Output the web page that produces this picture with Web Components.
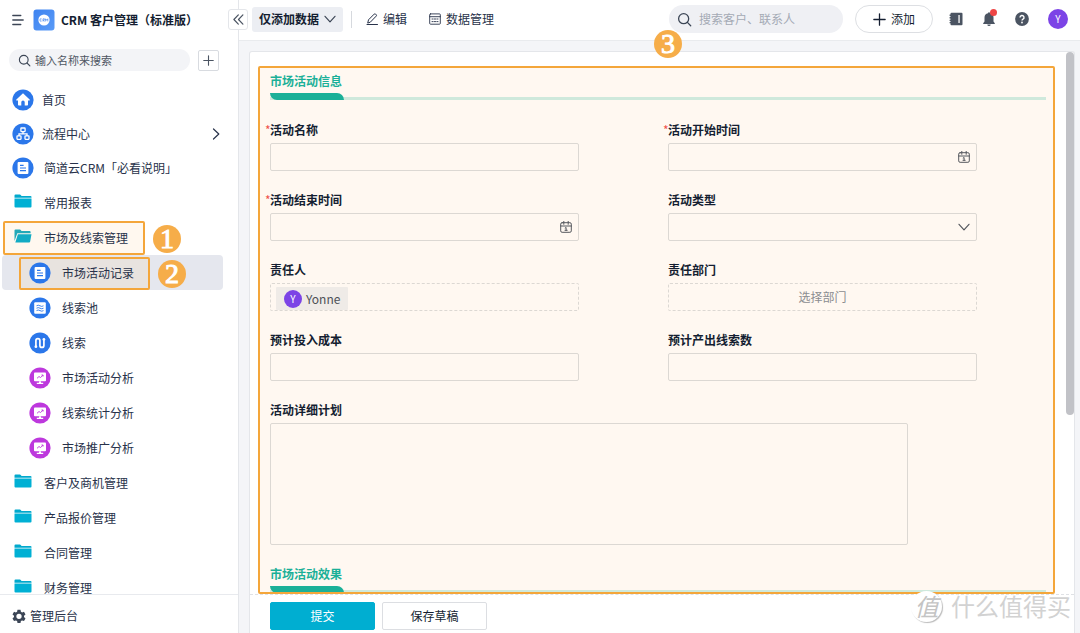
<!DOCTYPE html>
<html lang="zh-CN">
<head>
<meta charset="utf-8">
<meta name="viewport" content="width=device-width, initial-scale=1">
<title>CRM 客户管理（标准版）</title>
<style>
  html, body { margin: 0; height: 100%; }
  body {
    --ink: #141e31;
    --accent: #00aed1;
    --mark: #f4a63a;
    --teal: #1bb098;
    font: 12px/18px "Noto Sans CJK SC", "Noto Sans", sans-serif;
    color: var(--ink);
    background: #f4f5f8;
    overflow: hidden;
  }
</style>
</head>
<body>
<crm-app></crm-app>

<script>
const define = (name, html, setup) => {
  const template = document.createElement('template');
  template.innerHTML = '<style>*{box-sizing:border-box}:host{box-sizing:border-box}button,input,select,textarea{font:inherit;color:inherit;margin:0}button{cursor:pointer}</style>' + html;
  customElements.define(name, class extends HTMLElement {
    constructor() {
      super();
      this.attachShadow({ mode: 'open' }).append(template.content.cloneNode(true));
    }
    connectedCallback() { if (setup) setup(this, this.shadowRoot); }
  });
};

/* ---------- icons ---------- */
const disc = (fill, body) => `<svg viewBox="0 0 22 22"><circle cx="11" cy="11" r="10.6" fill="${fill}"/>${body}</svg>`;
const line = (box, body, w = 1.2) => `<svg viewBox="0 0 ${box} ${box}" fill="none" stroke="currentColor" stroke-width="${w}" stroke-linecap="round" stroke-linejoin="round">${body}</svg>`;
const BLUE = '#2b77ea';
const ICONS = {
  menu: line(12, '<path d="M.8 1.500h8M.8 6h10.400M.8 10.500h8"/>', 1.300),
  logo: `<svg viewBox="0 0 22 22"><defs><linearGradient id="g" x1="0" y1="0" x2="1" y2="1"><stop offset="0" stop-color="#3e83f0"/><stop offset="1" stop-color="#5a9bf7"/></linearGradient></defs><rect x=".5" y=".5" width="21" height="21" rx="3" fill="url(#g)"/><circle cx="11" cy="11" r="5.600" fill="#fff"/><path d="M8.600 9.900a1.200 1.200 0 1 0 0 2.200M10 12.400V9.800h1.200a.7.700 0 0 1 0 1.400H10l1.400 1.200M12.600 12.400V9.800l1.100 1.500 1.100-1.500v2.600" fill="none" stroke="#5a93ee" stroke-width=".8"/></svg>`,
  search: line(14, '<circle cx="6.200" cy="6.200" r="4.700"/><path d="M9.700 9.700 12.800 12.800"/>', 1.200),
  plus: line(12, '<path d="M6 .8v10.400M.8 6h10.400"/>', 1.200),
  collapse: line(12, '<path d="M5.800 1 1 6l4.800 5M10.800 1 6 6l4.800 5"/>', 1.300),
  right: line(12, '<path d="M3.500 1 8.800 6l-5.300 5"/>', 1.200),
  down: line(12, '<path d="M1 3.300 6 8.800l5-5.500"/>', 1.200),
  edit: line(12, '<path d="M1.800 9.700l.7-2.900L8.200 1.100a1 1 0 0 1 1.400 0l.6.6a1 1 0 0 1 0 1.400L4.600 8.900zM1 11.500h10.500"/>', 1),
  table: line(12, '<rect x=".7" y=".9" width="10.600" height="10.300" rx=".8"/><path d="M.7 3.700h10.600M3 6h1.200M5.400 6h1.200M7.800 6h1.200M3 8.600h1.200M5.400 8.600h1.200M7.800 8.600h1.200"/>', .9),
  calendar: line(12, '<rect x=".7" y="1.700" width="10.600" height="9.600" rx="1.400"/><path d="M.7 5h10.600M3.800.4v2.900M8.200.4v2.900M5.200 7 6.100 6.500V9.300M5 9.300h2.200"/>', 1),
  home: disc(BLUE, '<path d="M11 4.300 17.600 10.600a.5.500 0 0 1-.4.900H16v4.300a.8.800 0 0 1-.8.800h-2.500v-3.300a1.700 1.700 0 0 0-3.400 0v3.300H6.800a.8.800 0 0 1-.8-.8v-4.300H4.800a.5.500 0 0 1-.4-.9z" fill="#fff"/>'),
  flow: disc(BLUE, '<g fill="none" stroke="#fff" stroke-width="1.300"><rect x="8.900" y="5" width="4.200" height="3.600" rx=".5"/><rect x="5" y="12.900" width="4" height="3.400" rx=".5"/><rect x="13" y="12.900" width="4" height="3.400" rx=".5"/><path d="M11 8.600v2.200M7 12.900v-2.100h8v2.100"/></g>'),
  doc: disc(BLUE, '<rect x="5.600" y="5" width="10.800" height="12" rx="1" fill="#fff"/><path d="M8 8.400h3.600M8 11h6M8 13.600h6" stroke="#2b77ea" stroke-width="1.100"/>'),
  pool: disc(BLUE, '<rect x="5.200" y="5.200" width="11.600" height="11.600" rx="1" fill="#fff"/><path d="M7.500 8.800q1.700-1.200 3.500 0t3.500 0M7.500 11.200q1.700-1.200 3.500 0t3.500 0M7.500 13.600q1.700-1.200 3.500 0t3.500 0" fill="none" stroke="#2b77ea" stroke-width=".9"/>'),
  clue: disc(BLUE, '<path d="M6.900 14.300V8.700a2 2 0 0 1 4 0v4.700a2 2 0 0 0 4 0V8.200" fill="none" stroke="#fff" stroke-width="1.700"/><circle cx="6.900" cy="14.700" r="1.400" fill="#fff"/><circle cx="14.900" cy="7.500" r="1.400" fill="#fff"/>'),
  board: disc('#bd38dd', '<rect x="5" y="5.600" width="12" height="8.600" rx=".9" fill="#fff"/><path d="M10.200 14.200h1.600l.4 1.700h-2.400zM7.800 15.700h6.400v1.200H7.800z" fill="#fff"/><path d="M8 11.300l2-1.800 1.500 1 2.500-2.300M12.500 8h1.600v1.500" fill="none" stroke="#bd38dd" stroke-width=".9"/>'),
  folder: '<svg viewBox="0 0 18 14"><path d="M.5 3.700V1.500a1 1 0 0 1 1-1h4.600l1.500 1.400h8.900a1 1 0 0 1 1 1v.8z" fill="#00a9cd"/><path d="M.5 4.600h17v8a1 1 0 0 1-1 1h-15a1 1 0 0 1-1-1z" fill="#00b0d4"/></svg>',
  opened: '<svg viewBox="0 0 18 14"><path d="M.5 12V1.500a1 1 0 0 1 1-1h4.600l1.500 1.400h8a1 1 0 0 1 1 1v1.300H3.300z" fill="#23a9b8"/><path d="M3.900 5.200h13.600l-1.400 7.600a1 1 0 0 1-1 .8H1.300z" fill="#12abc4"/></svg>',
  gear: '<svg viewBox="0 0 14 14"><path fill="currentColor" fill-rule="evenodd" d="M5.500.8h3l.4 1.900 1.200.7 1.900-.6 1.500 2.600-1.500 1.300v1.400l1.500 1.300-1.500 2.600-1.900-.6-1.200.7-.4 1.800h-3l-.4-1.800-1.200-.7-1.900.6L.5 9.400 2 8.100V6.700L.5 5.400 2 2.800l1.900.6 1.200-.7zM7 4.700a2.600 2.600 0 1 0 0 5.300 2.600 2.600 0 0 0 0-5.300z"/></svg>',
  book: '<svg viewBox="0 0 14 14"><path fill="currentColor" fill-rule="evenodd" d="M2.500.8h10a1 1 0 0 1 1 1v10.400a1 1 0 0 1-1 1h-10a1 1 0 0 1-1-1v-1H.6v-1.300h.9V9H.6V7.700h.9V6.400H.6V5.100h.9V3.900H.6V2.600h.9v-.8a1 1 0 0 1 1-1zM9.400 3v8h1.300V3z"/></svg>',
  bell: '<svg viewBox="0 0 14 16"><path fill="currentColor" d="M7 1.200a1 1 0 0 1 1 1A4.300 4.300 0 0 1 11.500 6.500v4l1.300 1.800v.7H1.200v-.7l1.300-1.800v-4A4.300 4.300 0 0 1 6 2.200a1 1 0 0 1 1-1zM5.300 13.600h3.400a1.700 1.500 0 0 1-3.400 0z"/></svg>',
  help: '<svg viewBox="0 0 14 14"><circle cx="7" cy="7" r="6.900" fill="currentColor"/><path d="M5 5.500a2 2 0 1 1 3 1.700c-.7.400-1 .7-1 1.400" fill="none" stroke="#fff" stroke-width="1.400"/><circle cx="7" cy="10.500" r=".9" fill="#fff"/></svg>',
};
define('app-icon', `<style>
  :host { display: block; flex: none; width: var(--w, 12px); height: var(--h, var(--w, 12px)); }
  span { display: block; height: 100%; }
  svg { display: block; width: 100%; height: 100%; }
</style><span></span>`, (el, root) => { root.querySelector('span').innerHTML = ICONS[el.getAttribute('name')] || ''; });

/* ---------- numbered callout ---------- */
define('step-badge', `<style>
  :host { display: grid; place-items: center; width: 28px; height: 28px; border-radius: 50%;
    background: #f6ad49; color: #fff; font: 28px/28px "Liberation Serif", serif; -webkit-text-stroke: 1px #fff; }
</style><slot></slot>`);

define('user-avatar', `<style>
  :host { display: grid; place-items: center; flex: none; width: var(--d, 18px); height: var(--d, 18px); border-radius: 50%;
    background: #7c44e6; color: #fff; font-size: 10px; line-height: 16px; }
</style><slot></slot>`);

/* ---------- side navigation ---------- */
define('nav-item', `<style>
  :host { display: block; position: relative; height: 35px; padding-right: 15px; }
  :host([kind=app]) { height: 34px; }
  a { display: flex; align-items: center; height: 100%; padding-left: 12px; color: inherit; text-decoration: none; }
  app-icon { --w: 22px; margin-right: 8px; }
  :host([wide]) app-icon { margin-right: 10px; }
  :host([kind=folder]) a { padding-left: 14px; }
  :host([kind=folder]) app-icon { --w: 18px; --h: 14px; margin-right: 12px; margin-bottom: 3px; }
  :host([kind=sub]) a { padding-left: 27px; margin-left: 2px; }
  :host([kind=sub]) app-icon { margin-right: 11px; }
  :host([active]) a { background: #e5e7ee; border-radius: 4px; }
  .arrow { margin-left: auto; }
  a .arrow { --w: 12px !important; margin-right: 1px !important; }
  a > * { position: relative; z-index: 1; }
  .ring { display: none; position: absolute; z-index: 0; inset: 1px 93px 0 3px; border: 2px solid var(--mark); border-radius: 2px; background: #fff8ef; }
  .ring.over { background: #e8e3df; inset: 2px 88px 0 19px; }
  :host([step]) .ring { display: block; }
  step-badge { position: absolute; z-index: 1; top: 5px; left: var(--badge, 153px); }
</style><div class="ring"></div><a href="#"><app-icon></app-icon><span><slot></slot></span></a>`, (el, root) => {
  const icon = document.createElement('app-icon');
  icon.setAttribute('name', el.getAttribute('icon'));
  root.querySelector('app-icon').replaceWith(icon);
  if (el.hasAttribute('active')) root.querySelector('.ring').classList.add('over');
  if (el.hasAttribute('expandable')) {
    const arrow = document.createElement('app-icon');
    arrow.setAttribute('name', 'right');
    arrow.className = 'arrow';
    root.querySelector('a').append(arrow);
  }
  if (el.hasAttribute('step')) {
    const badge = document.createElement('step-badge');
    badge.textContent = el.getAttribute('step');
    root.append(badge);
  }
});

define('side-bar', `<style>
  :host { display: flex; flex-direction: column; width: 239px; flex: none; background: #fff; border-right: 1px solid #e4e6ea; min-height: 0; }
  header { display: flex; align-items: center; height: 39px; flex: none; padding-left: 12px; }
  header button { border: 0; background: none; padding: 0; color: #3c4656; }
  header > app-icon { --w: 22px; margin: 0 6px 0 9px; }
  h1 { margin: 0; font-size: 12px; line-height: 18px; font-weight: bold; white-space: nowrap; }
  .find { display: flex; align-items: center; gap: 8px; padding: 10px 19px 12px 9px; flex: none; }
  .box { display: flex; align-items: center; flex: 1; min-width: 0; height: 22px; gap: 4px; padding: 0 9px; border-radius: 11px; background: #f3f4f7; color: #3c4656; }
  .box app-icon { --w: 13px; }
  .box input { flex: 1; min-width: 0; border: 0; padding: 0; outline: 0; background: none; font-size: 11px; line-height: 16px; height: 18px; }
  input::placeholder { color: #4e5663; opacity: 1; }
  .find button { display: grid; place-items: center; width: 21px; height: 21px; padding: 0; border: 1px solid #d8dbe0; border-radius: 2px; background: #fff; color: #4b5462; }
  .find button app-icon { --w: 11px; }
  nav { flex: 1; min-height: 0; overflow: hidden; color: #28324a; }
  footer { flex: none; height: 39px; border-top: 1px solid #e8eaee; padding: 12px 12px 0; }
  footer a { display: flex; align-items: center; gap: 4px; color: #28324a; text-decoration: none; }
  footer app-icon { --w: 14px; color: #3c4656; }
</style>
<header><button aria-label="菜单"><app-icon name="menu"></app-icon></button><app-icon name="logo"></app-icon><h1>CRM 客户管理（标准版）</h1></header>
<div class="find"><label class="box"><app-icon name="search"></app-icon><input type="text" aria-label="搜索" placeholder="输入名称来搜索"></label><button aria-label="新建"><app-icon name="plus"></app-icon></button></div>
<nav>
  <nav-item kind="app" icon="home">首页</nav-item>
  <nav-item kind="app" icon="flow" expandable>流程中心</nav-item>
  <nav-item kind="app" icon="doc" wide>简道云CRM「必看说明」</nav-item>
  <nav-item kind="folder" icon="folder">常用报表</nav-item>
  <nav-item kind="folder" icon="opened" step="1">市场及线索管理</nav-item>
  <nav-item kind="sub" icon="doc" active step="2" style="--badge:158px">市场活动记录</nav-item>
  <nav-item kind="sub" icon="pool">线索池</nav-item>
  <nav-item kind="sub" icon="clue">线索</nav-item>
  <nav-item kind="sub" icon="board">市场活动分析</nav-item>
  <nav-item kind="sub" icon="board">线索统计分析</nav-item>
  <nav-item kind="sub" icon="board">市场推广分析</nav-item>
  <nav-item kind="folder" icon="folder">客户及商机管理</nav-item>
  <nav-item kind="folder" icon="folder">产品报价管理</nav-item>
  <nav-item kind="folder" icon="folder">合同管理</nav-item>
  <nav-item kind="folder" icon="folder">财务管理</nav-item>
</nav>
<footer><a href="#"><app-icon name="gear"></app-icon>管理后台</a></footer>`);

/* ---------- top bar ---------- */
define('top-bar', `<style>
  :host { display: flex; align-items: center; position: relative; height: 41px; flex: none; padding: 0 12px 2px 13px; background: #fff; border-bottom: 1px solid #e9ebee; }
  button { display: flex; align-items: center; border: 0; background: none; padding: 0; white-space: nowrap; }
  .fold { position: absolute; left: -11px; top: 9px; width: 20px; height: 21px; justify-content: center; background: #fff; border: 1px solid #e4e6ea; border-radius: 3px; color: #4b5462; }
  .fold app-icon { --w: 11px; }
  .mode { height: 25px; gap: 5px; padding: 0 7px; background: #eceef3; border-radius: 3px; font-weight: bold; }
  .mode app-icon { color: #3c4656; }
  .rule { width: 1px; height: 17px; background: #d6d9de; margin: 0 14px 0 8px; }
  .tool { gap: 5px; margin-right: 22px; color: #28324a; }
  .search { display: flex; align-items: center; gap: 7px; width: 174px; height: 28px; margin-left: auto; padding: 0 8px; border-radius: 14px; background: #eff0f4; color: #3c4656; }
  .search app-icon { --w: 15px; }
  .search input { border: 0; outline: 0; padding: 0; background: none; width: 100%; min-width: 0; }
  input::placeholder { color: #a4aab4; opacity: 1; }
  .add { height: 28px; width: 78px; gap: 5px; justify-content: center; margin: 0 16px 0 12px; border: 1px solid #dddfe3; border-radius: 14px; background: #fff; }
  .add app-icon { --w: 13px; }
  .icons { display: flex; align-items: center; gap: 19px; color: #4b5462; }
  .icons app-icon { --w: 14px; }
  .icons .bell { position: relative; }
  .icons .bell app-icon { --h: 16px; }
  .dot { position: absolute; right: -1px; top: -2px; width: 7px; height: 7px; border-radius: 50%; background: #ee4545; }
  user-avatar { --d: 20px; }
</style>
<button class="fold" aria-label="收起"><app-icon name="collapse"></app-icon></button>
<button class="mode">仅添加数据<app-icon name="down"></app-icon></button>
<span class="rule"></span>
<button class="tool"><app-icon name="edit"></app-icon>编辑</button>
<button class="tool"><app-icon name="table"></app-icon>数据管理</button>
<label class="search"><app-icon name="search"></app-icon><input type="text" aria-label="全局搜索" placeholder="搜索客户、联系人"></label>
<button class="add"><app-icon name="plus"></app-icon>添加</button>
<div class="icons">
  <button aria-label="通讯录"><app-icon name="book"></app-icon></button>
  <button class="bell" aria-label="消息"><app-icon name="bell"></app-icon><span class="dot"></span></button>
  <button aria-label="帮助"><app-icon name="help"></app-icon></button>
  <button aria-label="账户"><user-avatar>Y</user-avatar></button>
</div>`);

/* ---------- form ---------- */
define('section-title', `<style>
  :host { display: block; border-bottom: 3px solid #cfe9dc; height: 28px; color: var(--teal); }
  h2 { width: fit-content; height: 28px; margin: 0; padding-right: 2px; font-size: 12px; line-height: 18px; font-weight: bold; position: relative; }
  h2::after { content: ""; position: absolute; left: 0; right: 0; bottom: 0; height: 7px; background: var(--teal); border-radius: 0 8px 0 8px; }
</style><h2><slot></slot></h2>`);

const CONTROLS = {
  text: '<input id="c" type="text">',
  date: '<input id="c" type="text"><app-icon name="calendar"></app-icon>',
  select: '<select id="c"><option></option></select><app-icon name="down"></app-icon>',
  member: '<button id="c" class="pick left"><span class="chip"><user-avatar>Y</user-avatar>Yonne</span></button>',
  dept: '<button id="c" class="pick">选择部门</button>',
  area: '<textarea id="c"></textarea>',
};
define('form-field', `<style>
  :host { display: block; padding-right: 89px; }
  :host([type=area]) { grid-column: 1 / -1; padding-right: 158px; }
  label { display: block; position: relative; margin-bottom: 4px; font-weight: bold; }
  :host([required]) label::before { content: "*"; position: absolute; left: -5px; color: #f0504a; font-weight: normal; }
  .control { display: grid; align-items: center; }
  .control > * { grid-area: 1 / 1; }
  input, select, textarea, .pick { display: block; width: 100%; height: 28px; padding: 0 8px; border: 1px solid #dcd8d3; border-radius: 2px; background: none; outline: 0; appearance: none; }
  textarea { height: 122px; resize: none; }
  .pick { border-style: dashed; color: #8b8d90; text-align: center; }
  .left { display: flex; align-items: end; padding: 0 5px; }
  .chip { display: flex; align-items: center; gap: 4px; height: 23px; padding: 0 8px; background: #efebe7; color: #4d5057; border-radius: 1px; }
  app-icon { justify-self: end; margin-right: 7px; color: #55585e; pointer-events: none; }
  user-avatar { --d: 18px; }
</style><label for="c"><slot></slot></label><div class="control"></div>`, (el, root) => {
  root.querySelector('.control').innerHTML = CONTROLS[el.getAttribute('type')];
});

define('record-form', `<style>
  :host { display: flex; flex-direction: column; flex: 1; min-height: 0; background: #fff; border: 1px solid #e4e6ea; border-bottom: 0; border-radius: 3px 3px 0 0; }
  .body { display: flex; flex: 1; min-height: 0; overflow: hidden; }
  .sheet { flex: 1; min-width: 0; overflow: hidden; margin: 14px 11px 0 8px; padding: 4px 7px 0 10px; border: 2px solid var(--mark); border-radius: 2px; background: #fff8f1; }
  .grid { display: grid; grid-template-columns: 1fr 1fr; row-gap: 20px; margin: 21px -20px 20px 0; }
  .thumb { flex: none; width: 8px; height: 67%; border-radius: 4px; background: #c1c2c7; }
  footer { display: flex; gap: 7px; flex: none; padding: 7px 20px 3px; border-top: 1px dashed #dfe1e5; }
  footer button { width: 105px; height: 28px; padding: 0; border: 1px solid #dcdee2; border-radius: 2px; background: #fff; }
  footer .primary { background: var(--accent); border-color: var(--accent); color: #fff; }
</style>
<div class="body">
  <div class="sheet">
    <section-title>市场活动信息</section-title>
    <div class="grid">
      <form-field type="text" required>活动名称</form-field>
      <form-field type="date" required>活动开始时间</form-field>
      <form-field type="date" required>活动结束时间</form-field>
      <form-field type="select">活动类型</form-field>
      <form-field type="member">责任人</form-field>
      <form-field type="dept">责任部门</form-field>
      <form-field type="text">预计投入成本</form-field>
      <form-field type="text">预计产出线索数</form-field>
      <form-field type="area">活动详细计划</form-field>
    </div>
    <section-title>市场活动效果</section-title>
  </div>
  <div class="thumb"></div>
</div>
<footer><button class="primary">提交</button><button>保存草稿</button></footer>`);

define('water-mark', `<style>
  :host { display: flex; align-items: center; gap: 9px; color: #d2d2d2; font-size: 24px; line-height: 32px; text-shadow: -1px -1px 0 #fff; white-space: nowrap; }
  i { display: grid; place-items: center; width: 31px; height: 31px; border-radius: 50%; background: #fff; box-shadow: 1px 1px 1px #bbb; color: #c4c4c4; font-size: 24px; line-height: 30px; }
</style><i>值</i><span>什么值得买</span>`);

define('crm-app', `<style>
  :host { display: flex; height: 100vh; }
  main { display: flex; flex-direction: column; flex: 1; min-width: 0; position: relative; }
  .page { display: flex; flex: 1; min-height: 0; padding: 10px 5px 0 10px; }
  main > step-badge { position: absolute; left: 415px; top: 30px; }
  water-mark { position: absolute; right: 9px; bottom: 11px; }
</style>
<side-bar></side-bar>
<main>
  <top-bar></top-bar>
  <div class="page"><record-form></record-form></div>
  <step-badge>3</step-badge>
  <water-mark></water-mark>
</main>`);
</script>
</body>
</html>
